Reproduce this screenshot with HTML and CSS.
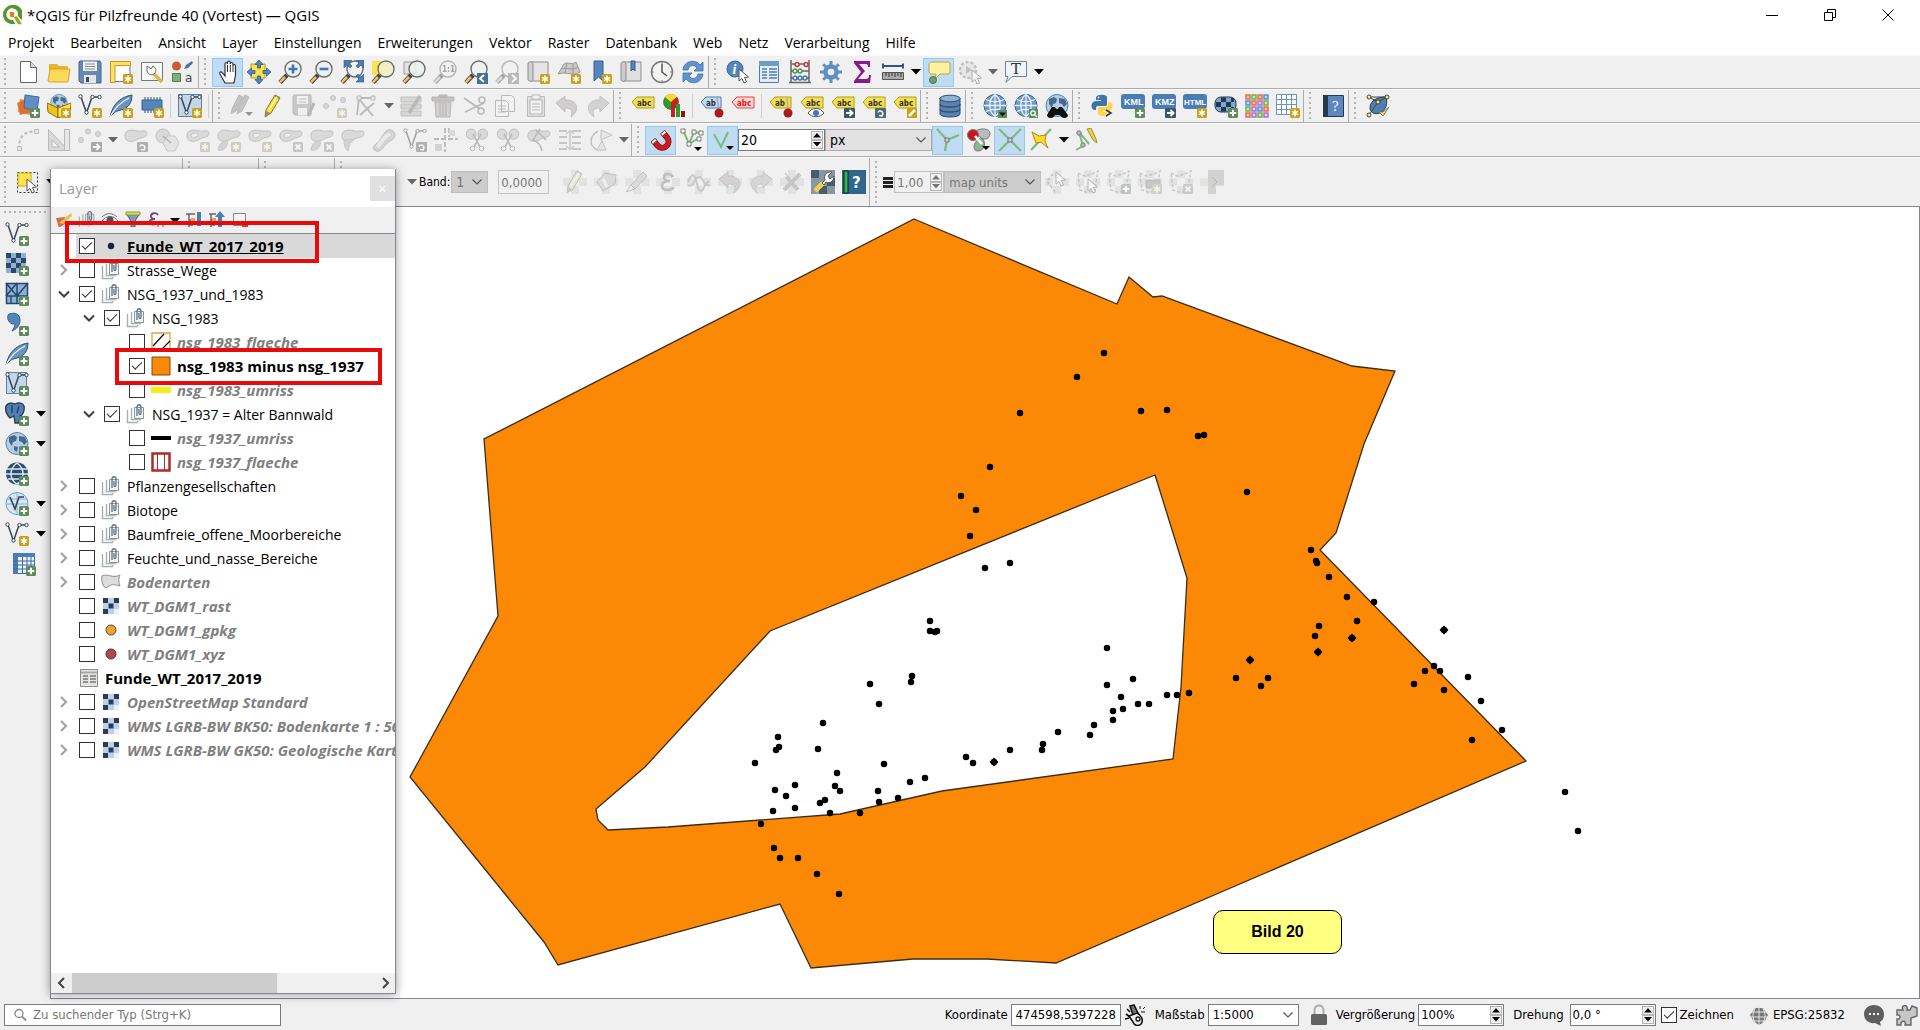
FILE: index.html
```html
<!DOCTYPE html>
<html lang="de">
<head>
    <meta charset="UTF-8">
    <meta name="viewport" content="width=device-width, initial-scale=1.0">
    <title>*QGIS für Pilzfreunde 40 (Vortest) — QGIS</title>
    <link rel="stylesheet" href="styles.css">
</head>
<body>

    <!-- icon sprite -->
    <svg class="sprite" aria-hidden="true">
        <defs>
            <!-- shared parts -->
            <g id="b-new"><rect x="14" y="14" width="10" height="10" rx="1.5" fill="#c9a21c"/><path d="M19 15.500v7M16 17.300l6 3.400M16 20.700l6-3.400" stroke="#fff" stroke-width="1.500"/></g>
            <g id="b-add"><rect x="14" y="14" width="10" height="10" rx="1.500" fill="#5b8c5a"/><path d="M19 15.700v6.600M15.700 19h6.600" stroke="#fff" stroke-width="2"/></g>
            <g id="b-del"><rect x="14" y="14" width="10" height="10" rx="1.500" fill="#b88"/><path d="M16.500 16.500l5 5M21.500 16.500l-5 5" stroke="#fff" stroke-width="1.800"/></g>
            <g id="b-go"><rect x="13" y="14" width="11" height="10" rx="1" fill="#3d5568"/><path d="M15 19h6M18.500 16l3 3-3 3" stroke="#fff" stroke-width="2" fill="none"/></g>
            <g id="b-rot"><rect x="13" y="14" width="11" height="10" rx="1" fill="#4d687a"/><path d="M17 21.500l3 .5c3-4-3-7-4-3.500" stroke="#fff" stroke-width="1.600" fill="none"/></g>
            <g id="mag"><path d="M9 15l-7 7.500" stroke="#444" stroke-width="4.500"/><path d="M7 17l-5 5.200" stroke="#f0c060" stroke-width="2.600"/><circle cx="15" cy="9" r="8" fill="#edf2ee" fill-opacity=".85" stroke="#6b6f70" stroke-width="1.400"/></g>
            <g id="cursor"><path d="M0 0v12l3-2.500 2 4.500 2.500-1-2-4.500 4-.5z" fill="#fff" stroke="#555"/></g>
            <g id="vee"><path d="M3 3l5.500 16L14 3h7" stroke="#37474f" stroke-width="1.500" fill="none"/><g fill="#fff" stroke="#37474f"><circle cx="2.500" cy="2.500" r="1.700"/><circle cx="8.500" cy="18.500" r="1.700"/><circle cx="14.500" cy="3" r="1.700"/><circle cx="21.500" cy="3" r="1.700"/></g></g>
            <g id="quill"><path d="M1 23C4 9 12 3 23 1c0 7-3 13-11 15-3 1-6 1-8 4z" fill="#6a94c0" stroke="#31506e"/><path d="M1 23C6 13 12 8 20 4" stroke="#e9f1f8" stroke-width="1.200" fill="none"/></g>
            <g id="sphere"><circle cx="12" cy="11.500" r="11" fill="#6d9cc9" stroke="#3f5f80"/><path d="M1 11.500h22M12 .5v22M3 5.500c5 3 13 3 18 0M3 17.500c5-3 13-3 18 0M12 .5c-7 5-7 17 0 22M12 .5c7 5 7 17 0 22" stroke="#e8f1fa" stroke-width="1.300" fill="none"/></g>
            <g id="earth"><circle cx="12" cy="11.500" r="11" fill="#b3cde6" stroke="#5580a8"/><path d="M4 5l5-2 3 2-1 4-3 1-1 4-3-4zM14 4l6 1 2 5-3 3-2-3-3-1zM9 14l4 1-1 5-3-2zM16 14l3 1-2 4z" fill="#46698c"/></g>
            <g id="blob"><path d="M1 9c-1-7 6-8 12-6 4 1 9-2 10 2 0 5-6 4-9 6-4 3-12 4-13-2z" fill="#b9c2b9" stroke="#7f877f"/></g>
            <g id="tag"><path d="M1 8l5-5h17v11H6z" fill="#f5e04a" stroke="#b39a18"/><text x="6" y="12" font-size="8" font-weight="700" font-family="DejaVu Sans Condensed" fill="#333">abc</text></g>
            <g id="tile"><rect x="1" y="1" width="20" height="20" fill="#8db0d6"/><path d="M1 1h5v5H1zM11 1h5v5h-5zM6 6h5v5H6zM16 6h5v5h-5zM1 11h5v5H1zM11 11h5v5h-5zM6 16h5v5H6z" fill="#2e4668"/></g>
            <g id="snips"><path d="M6 1c-6 0-6 9-1 10 3 1 6-1 6-5 0-3-2-5-5-5zM18 1c6 0 6 9 1 10-3 1-6-1-6-5 0-3 2-5 5-5z" fill="#b9c2b9" stroke="#7f877f"/><path d="M8 6l7 13M16 6L9 19" stroke="#777" stroke-width="1.600"/><circle cx="7.500" cy="20.500" r="2.300" fill="none" stroke="#777"/><circle cx="16.500" cy="20.500" r="2.300" fill="none" stroke="#777"/></g>
            <g id="fence"><path d="M2 3l6 3 8-2 6-3-2 12-1 8-9 1-6-2z" fill="none" stroke="#888" stroke-width="1.500" stroke-dasharray="3 2"/></g>
        </defs>

        <symbol id="logo" viewBox="0 0 24 24"><path d="M12 0a11.500 11.500 0 1 0 4 22.500l-3-4.500a7 7 0 1 1 6-5l4 5A11.500 11.500 0 0 0 12 0z" fill="#589632"/><path d="M14 14l4-.5 6 9.500h-5z" fill="#93b023"/><path d="M9 8l6 1-1 6-4-1z" fill="#ee7913"/></symbol>
        <symbol id="new" viewBox="0 0 24 24"><path d="M4.500 1.500h10l6 6v15h-16z" fill="#fff" stroke="#666"/><path d="M14.500 1.500v6h6" fill="#ddd" stroke="#666"/></symbol>
        <symbol id="open" viewBox="0 0 24 24"><path d="M2 4h8l2 2h9v15H2z" fill="#e8b430"/><path d="M1 21l2-12h20l-2 13H2z" fill="#ffd95a" stroke="#d9a52a"/></symbol>
        <symbol id="save" viewBox="0 0 24 24"><path d="M2 1h20l1 2v20H3l-2-2V2z" fill="#6389b4" stroke="#44648a"/><path d="M5 1.500h14V11H5z" fill="#f2f2f2"/><path d="M7 4h10M7 6.500h10M7 9h10" stroke="#8a8a8a"/><path d="M6 15h12v8H6z" fill="#e6e6e6"/><path d="M8 17h3v5H8z" fill="#35506f"/></symbol>
        <symbol id="layout" viewBox="0 0 24 24"><path d="M5 2.500h16v19H5z" fill="#fff" stroke="#777"/><path d="M1.500 1.500h20v4H6v17H1.500z" fill="#ffe066" stroke="#c29a1e"/><use href="#b-new"/></symbol>
        <symbol id="layouts" viewBox="0 0 24 24"><path d="M1.500 2.500h21v18h-21z" fill="#f7f7f7" stroke="#777"/><path d="M14 14l8 8" stroke="#d9b84c" stroke-width="3.500"/><path d="M7 6l4 3 2-3c3 2 4 5 1 8-3 2-6 0-7-3z" fill="#fff" stroke="#666"/></symbol>
        <symbol id="style" viewBox="0 0 24 24"><circle cx="5.500" cy="6" r="4.500" fill="#cc5a32"/><path d="M13 9l2-4 6-4 1 2-5 5z" fill="#4a74a8"/><path d="M1.500 13.500h8v8h-8z" fill="#80b080" stroke="#4d7d4d"/><text x="14" y="21.500" font-size="12" font-family="DejaVu Sans" fill="#444">a</text></symbol>
        <symbol id="pan" viewBox="0 0 24 24"><path d="M7 23l-5-9c-1-2 1-3 2.500-1L7 16V4c0-2 2.500-2 2.500 0V2.500c0-2 2.800-2 2.800 0V4c0-2 2.700-2 2.700 0v2c0-2 2.500-2 2.500 0v9l-1.500 8z" transform="translate(2)" fill="#fff" stroke="#333" stroke-width="1.200"/><path d="M11.500 5v7M14.300 5v7M17 6v6" stroke="#333"/></symbol>
        <symbol id="pansel" viewBox="0 0 24 24"><path d="M4 4h14v14H4z" fill="#ffe34d" stroke="#b59b20"/><path d="M12 0l4 4.500h-2.500V8h-3V4.500H8zM12 24l4-4.500h-2.500V16h-3v3.500H8zM0 12l4.500-4v2.500H8v3H4.500V16zM24 12l-4.500-4v2.500H16v3h3.500V16z" fill="#5486bd" stroke="#2f5a88" stroke-width=".8"/></symbol>
        <symbol id="zin" viewBox="0 0 24 24"><use href="#mag"/><path d="M15 4.500v9M10.500 9h9" stroke="#3f74b5" stroke-width="2.600"/></symbol>
        <symbol id="zout" viewBox="0 0 24 24"><use href="#mag"/><path d="M10.500 9h9" stroke="#3f74b5" stroke-width="2.600"/></symbol>
        <symbol id="zfull" viewBox="0 0 24 24"><use href="#mag"/><path d="M4 0h8l-3 3 3 3-2 2-3-3-3 3zM24 0v8l-3-3-3 3-2-2 3-3-3-3zM24 22h-8l3-3-3-3 2-2 3 3 3-3z" fill="#4a7db5" stroke="#2f5a88" stroke-width=".6"/></symbol>
        <symbol id="zsel" viewBox="0 0 24 24"><path d="M1 1h12v14H1z" fill="#ffe34d"/><use href="#mag"/><circle cx="15" cy="9" r="7" fill="#f5eeb0" opacity=".7"/></symbol>
        <symbol id="zlay" viewBox="0 0 24 24"><path d="M2 2h12v12H2z" fill="#e4e4e4" stroke="#999"/><use href="#mag"/></symbol>
        <symbol id="zone" viewBox="0 0 24 24"><use href="#mag"/><text x="9" y="12" font-size="8" font-weight="700" font-family="DejaVu Sans Condensed" fill="#444">1:1</text></symbol>
        <symbol id="zlast" viewBox="0 0 24 24"><use href="#mag"/><path d="M13 13h11v11H13z" fill="#4a7090"/><path d="M20 15l-4 3.500 4 3.500" stroke="#fff" stroke-width="2" fill="none"/></symbol>
        <symbol id="znext" viewBox="0 0 24 24"><use href="#mag"/><path d="M13 13h11v11H13z" fill="#777"/><path d="M17 15l4 3.500-4 3.500" stroke="#fff" stroke-width="2" fill="none"/></symbol>
        <symbol id="mapnew" viewBox="0 0 24 24"><path d="M5 2h17v19H5z" fill="#e5e5e5" stroke="#8c8c8c"/><path d="M2 4c0-3 5-3 5 0v15c0 3-5 3-5 0z" fill="#d0d0d0" stroke="#8c8c8c"/><use href="#b-new"/></symbol>
        <symbol id="map3d" viewBox="0 0 24 24"><path d="M1 14L7 4c4-3 7 2 12-2l4 10c-6 5-13-1-22 2z" fill="#c9c9c9" stroke="#999"/><path d="M4 9c6-2 12 2 17-2M10 3L8 13M16 4v10" stroke="#999" fill="none"/><use href="#b-new"/></symbol>
        <symbol id="bmnew" viewBox="0 0 24 24"><path d="M6 1h9v20l-4.500-4L6 21z" fill="#5486bd" stroke="#35608f"/><use href="#b-new"/></symbol>
        <symbol id="bm" viewBox="0 0 24 24"><path d="M4 2h18v19H4z" fill="#e0e0e0" stroke="#8c8c8c"/><path d="M2 4c0-3 5-3 5 0v15c0 3-5 3-5 0z" fill="#ccc" stroke="#8c8c8c"/><path d="M12 1h4v10l-2-2-2 2z" fill="#5486bd" stroke="#35608f"/></symbol>
        <symbol id="clock" viewBox="0 0 24 24"><circle cx="12" cy="12" r="10.500" fill="#f3f3f0" stroke="#777" stroke-width="1.500"/><path d="M12 4v8l5 4" stroke="#555" stroke-width="1.500" fill="none"/><path d="M12 2v2M12 20v2M2 12h2M20 12h2" stroke="#777"/></symbol>
        <symbol id="refresh" viewBox="0 0 24 24"><path d="M2 10C3 0 15-1 19 5l3-3v9h-9l3-3c-3-4-8-3-9 2zM22 14c-1 10-13 11-17 5l-3 3v-9h9l-3 3c3 4 8 3 9-2z" fill="#5f94cc" stroke="#3e6fa3" stroke-width=".8"/></symbol>
        <symbol id="ident" viewBox="0 0 24 24"><circle cx="9" cy="9" r="8" fill="#5486bd" stroke="#3c6a9d"/><text x="6.500" y="14" font-size="14" font-weight="700" font-style="italic" font-family="Liberation Serif" fill="#fff">i</text><use href="#cursor" x="13" y="9"/></symbol>
        <symbol id="table" viewBox="0 0 24 24"><path d="M2.500 1.500h19v21h-19z" fill="#e4eef8" stroke="#4a7db5"/><path d="M2 1h20v5H2z" fill="#6d9cc9"/><path d="M5 9h5M5 12h5M5 15h5M5 18h5M12 9h8M12 12h8M12 15h8M12 18h8" stroke="#4a7db5" stroke-width="1.500"/></symbol>
        <symbol id="abacus" viewBox="0 0 24 24"><path d="M3 0v23M21 0v23M1 22.500h22M3 4h18M3 11h18M3 18h18" stroke="#666" stroke-width="1.500"/><g fill="#fff" stroke-width="1.600"><path d="M9 2.500a2 2 0 1 0 .1 0zM18 2.500a2 2 0 1 0 .1 0z" stroke="#c33"/><path d="M7 9a2 2 0 1 0 .1 0zM12 9a2 2 0 1 0 .1 0z" stroke="#4a9a4a"/><path d="M7 16a2 2 0 1 0 .1 0zM12 16a2 2 0 1 0 .1 0zM17 16a2 2 0 1 0 .1 0z" stroke="#3f74b5"/></g></symbol>
        <symbol id="gear" viewBox="0 0 24 24"><circle cx="12" cy="12" r="5.500" fill="none" stroke="#5f8fc4" stroke-width="4.500"/><path d="M12 1v22M1 12h22M4.200 4.200l15.600 15.600M19.800 4.200L4.200 19.800" stroke="#5f8fc4" stroke-width="3"/><circle cx="12" cy="12" r="3.300" fill="#f0f0f0"/></symbol>
        <symbol id="sigma" viewBox="0 0 24 24"><path d="M4 1h16v6h-2c0-3-1-3-3-3H9l6 7-7 8h8c2 0 3-1 3-4h2l-1 8H4v-2l7-9-7-9z" fill="#8a1a8a"/></symbol>
        <symbol id="ruler" viewBox="0 0 24 24"><path d="M2 6h20M2 3.500v5M22 3.500v5" stroke="#34557d" stroke-width="2"/><path d="M1.500 12.500h21v7h-21z" fill="#aaa" stroke="#555"/><path d="M5 13v3M8 13v4M11 13v3M14 13v4M17 13v3M20 13v4" stroke="#333"/></symbol>
        <symbol id="tip" viewBox="0 0 24 24"><path d="M5 2h16c2 0 2 1 2 3v6c0 2-1 3-3 3h-7l-5 5 1-5H5c-2 0-3-1-3-3V5c0-2 1-3 3-3z" fill="#fff1a0" stroke="#b7a24e"/><circle cx="6" cy="20" r="3.500" fill="#6fa06f" stroke="#477047"/></symbol>
        <symbol id="action" viewBox="0 0 24 24"><circle cx="10" cy="10" r="8" fill="#ddd" stroke="#888" stroke-width="2.500" stroke-dasharray="3 2"/><path d="M8 6l6 4-6 4z" fill="#888"/><use href="#cursor" x="14" y="10"/></symbol>
        <symbol id="note" viewBox="0 0 24 24"><path d="M1.500 1.500h21v15H8l-6 6 2-6H1.500z" fill="#eef4fa" stroke="#77838c"/><text x="7" y="14" font-size="15" font-family="DejaVu Serif" fill="#333">T</text></symbol>
        <symbol id="source" viewBox="0 0 24 24"><path d="M1 9l10-4 4 13-11 3z" fill="#c8842b"/><path d="M4 5l12 2-2 14-12-3z" fill="#e9682c" opacity=".8"/><path d="M9 1l14 2-2 14-13-3z" fill="#5f8fc4" stroke="#3c6a9d"/><use href="#b-add"/></symbol>
        <symbol id="gpkg" viewBox="0 0 24 24"><use href="#earth" transform="translate(3) scale(.75)"/><path d="M0 9l11 5v10L1 18z" fill="#f0c419" stroke="#8a6d0c"/><path d="M24 9l-13 5v10l12-5z" fill="#ffe34d" stroke="#8a6d0c"/><use href="#b-new"/></symbol>
        <symbol id="vnew" viewBox="0 0 24 24"><use href="#vee"/><use href="#b-new"/></symbol>
        <symbol id="vadd" viewBox="0 0 24 24"><use href="#vee"/><use href="#b-add"/></symbol>
        <symbol id="qnew" viewBox="0 0 24 24"><use href="#quill"/><use href="#b-new"/></symbol>
        <symbol id="qadd" viewBox="0 0 24 24"><use href="#quill"/><use href="#b-add"/></symbol>
        <symbol id="chip" viewBox="0 0 24 24"><path d="M5 3v16M8 3v16M11 3v16M14 3v16M17 3v16M20 3v12" stroke="#35506f"/><path d="M2 6h20v10H2z" fill="#5486bd" stroke="#35608f"/><use href="#b-new"/></symbol>
        <symbol id="virt" viewBox="0 0 24 24"><path d="M.5.5h23v22H.5z" fill="#c3d6ea" stroke="#5f7f9f"/><use href="#vee"/><use href="#b-new"/></symbol>
        <symbol id="virtadd" viewBox="0 0 24 24"><path d="M1.500.5h20v21h-20z" fill="#c3d6ea" stroke="#5f7f9f"/><use href="#vee"/><use href="#b-add"/></symbol>
        <symbol id="edits" viewBox="0 0 24 24"><path d="M1 20l1-5L9 1l4 2-7 14zM7 20l1-5 7-14 4 2-7 14z" fill="#998a8a" stroke="#777"/><path d="M15 18h8l-4 4z" fill="#222"/></symbol>
        <symbol id="pencil" viewBox="0 0 24 24"><path d="M4 23l1-7L14 1l5 3-9 15z" fill="#f7dd3a" stroke="#8a7414"/><path d="M4 23l1-6 4 2zM15 1l4 2-1 2-4-2z" fill="#8b8d84"/><path d="M8 16l8-13" stroke="#fff6b0" stroke-width="1.500"/></symbol>
        <symbol id="savee" viewBox="0 0 24 24"><path d="M2 1h17v20H3l-2-2V2z" fill="#999" stroke="#777"/><path d="M5 2h11v8H5zM6 14h9v7H6z" fill="#eee"/><path d="M7 5h7M7 8h7" stroke="#888"/><path d="M16 22l6-13" stroke="#776c6c" stroke-width="3"/></symbol>
        <symbol id="addpt" viewBox="0 0 24 24"><g fill="#bbb" stroke="#888"><circle cx="3" cy="12" r="2.500"/><circle cx="10" cy="4" r="2.500"/><circle cx="20" cy="6" r="2.500"/></g><use href="#b-new"/></symbol>
        <symbol id="vertex" viewBox="0 0 24 24"><path d="M3 21L5 4h15M5 5l14 17M20 9L6 21" stroke="#777" stroke-width="1.800" fill="none"/><path d="M3 2h4v4H3zM17 2h4v4h-4z" fill="#ddd" stroke="#777"/></symbol>
        <symbol id="attr" viewBox="0 0 24 24"><path d="M1 3h20v5H1zM1 10h20v5H1zM1 17h20v5H1z" fill="#bbb8a0" stroke="#888"/><path d="M9 19L20 2" stroke="#777" stroke-width="3.500"/></symbol>
        <symbol id="trash" viewBox="0 0 24 24"><path d="M1 3h22v4H1zM8 1h8v2H8z" fill="#a88" stroke="#866"/><path d="M4 8h16l-1 15H5z" fill="#c0a5a5" stroke="#866"/><path d="M9 9v13M12 9v13M15 9v13" stroke="#866"/></symbol>
        <symbol id="cut" viewBox="0 0 24 24"><path d="M2 4l16 11M3 18L22 9" stroke="#777" stroke-width="1.800"/><circle cx="19" cy="17" r="3" fill="none" stroke="#777" stroke-width="1.500"/><circle cx="20" cy="6" r="3" fill="none" stroke="#777" stroke-width="1.500"/></symbol>
        <symbol id="copy" viewBox="0 0 24 24"><path d="M8.500 1.500h10l3 3v13h-13zM2.500 6.500h10l3 3v13h-13z" fill="#f5f5f5" stroke="#777"/><path d="M5 12h8M5 15h8M5 18h8" stroke="#777"/></symbol>
        <symbol id="paste" viewBox="0 0 24 24"><path d="M3.500 2.500h17v20h-17z" fill="#ccc" stroke="#777"/><path d="M6 6h12v14H6zM8 1h8v4H8z" fill="#f5f5f5" stroke="#777"/><path d="M8 10h8M8 13h8M8 16h8" stroke="#777"/></symbol>
        <symbol id="undo" viewBox="0 0 24 24"><path d="M1 9l9-7v4c13-1 15 11 6 17 2-6 1-9-6-9v4z" fill="#b5a09c" stroke="#8d8480"/></symbol>
        <symbol id="redo" viewBox="0 0 24 24"><path d="M23 9l-9-7v4C1 5-1 17 8 23c-2-6-1-9 6-9v4z" fill="#aab2aa" stroke="#848d84"/></symbol>
        <symbol id="lab" viewBox="0 0 24 24"><use href="#tag"/></symbol>
        <symbol id="diag" viewBox="0 0 24 24"><circle cx="9" cy="8" r="7.500" fill="#2c9c2c" stroke="#444" stroke-width=".6"/><path d="M9 8L3 3a7.500 7.500 0 0 1 12 0z" fill="#ffd92e"/><path d="M9 8l6-5c3 5 1 10-6 12.500z" fill="#c8201c"/><path d="M9 12h4v11H9z" fill="#c8201c"/><path d="M14 10h4v13h-4z" fill="#2c9c2c"/><path d="M19 17h4v6h-4z" fill="#8a1515"/></symbol>
        <symbol id="labblue" viewBox="0 0 24 24"><path d="M1 8l5-5h15v11H6z" fill="#bcdcf8" stroke="#4a7db5"/><text x="6" y="12" font-size="8" font-weight="700" font-family="DejaVu Sans Condensed" fill="#333">ab</text><path d="M17 4l2 12" stroke="#aaa" stroke-width="1.500"/><circle cx="19" cy="19" r="4.500" fill="#a81c1c"/></symbol>
        <symbol id="labred" viewBox="0 0 24 24"><path d="M1 8l5-5h17v11H6z" fill="#ffd6d6" stroke="#e04040"/><text x="6" y="12" font-size="8" font-weight="700" font-family="DejaVu Sans Condensed" fill="#e01818">abc</text></symbol>
        <symbol id="labpin" viewBox="0 0 24 24"><path d="M1 8l5-5h16v11H6z" fill="#f5e04a" stroke="#b39a18"/><text x="6" y="12" font-size="8" font-weight="700" font-family="DejaVu Sans Condensed" fill="#333">ab</text><path d="M18 4l1 12" stroke="#aaa" stroke-width="1.500"/><circle cx="19" cy="19" r="4.500" fill="#a81c1c"/></symbol>
        <symbol id="labeye" viewBox="0 0 24 24"><use href="#tag"/><path d="M8 19c4-6 12-6 16 0-4 5-12 5-16 0z" fill="#fff" stroke="#555"/><circle cx="16" cy="19" r="3" fill="#3f74b5"/></symbol>
        <symbol id="labgo" viewBox="0 0 24 24"><use href="#tag"/><use href="#b-go"/></symbol>
        <symbol id="labrot" viewBox="0 0 24 24"><use href="#tag"/><use href="#b-rot"/></symbol>
        <symbol id="labedit" viewBox="0 0 24 24"><use href="#tag"/><path d="M14 14h10v10H14z" fill="#c9a21c"/><path d="M16 22l6-6" stroke="#fff" stroke-width="2.500"/></symbol>
        <symbol id="db" viewBox="0 0 24 24"><path d="M2 4v16c0 4 20 4 20 0V4z" fill="#5c83b0" stroke="#2e4d70"/><ellipse cx="12" cy="4.500" rx="10" ry="3.300" fill="#8fb2d8" stroke="#2e4d70"/><path d="M2 10c0 4 20 4 20 0M2 15c0 4 20 4 20 0" fill="none" stroke="#2e4d70" stroke-width="1.300"/></symbol>
        <symbol id="web1" viewBox="0 0 24 24"><use href="#sphere"/><path d="M15 16h9v8h-9z" fill="#5b8c5a"/><path d="M16 18.500h7l-3.500 4z" fill="#111"/></symbol>
        <symbol id="web2" viewBox="0 0 24 24"><use href="#sphere"/><path d="M15 15h9v9h-9z" fill="#5b8c5a"/><circle cx="19" cy="19" r="2.200" fill="none" stroke="#fff" stroke-width="1.300"/><path d="M21 21l2 2" stroke="#fff" stroke-width="1.300"/></symbol>
        <symbol id="web3" viewBox="0 0 24 24"><use href="#earth"/><path d="M7 13h3l1 2h2l1-2h3l6 8c0 4-7 4-8 0h-5c-1 4-8 4-8 0z" fill="#111"/></symbol>
        <symbol id="python" viewBox="0 0 24 24"><path d="M6 3c2-3 10-3 11 0v7c0 2-1 2-2 2H8c-2 0-2 1-2 4-6 1-6-9 0-9h5V6H6z" fill="#3a74a8"/><path d="M8 20v-5c0-2 1-2 2-2h6c2 0 2-2 2-5 6-1 6 9 0 9h-5v1h4c0 5-8 5-9 2z" fill="#ffd445"/><path d="M16 16l5 3-5 3" stroke="#333" stroke-width="1.500" fill="none"/><circle cx="8.500" cy="3.500" r="1" fill="#fff"/></symbol>
        <symbol id="kml" viewBox="0 0 24 24"><rect y="0" width="24" height="15" rx="3" fill="#4a7db5"/><text x="3" y="11" font-size="9" font-weight="700" font-family="Liberation Sans" fill="#fff">KML</text><use href="#b-add"/></symbol>
        <symbol id="kmz" viewBox="0 0 24 24"><rect y="0" width="24" height="15" rx="3" fill="#4a7db5"/><text x="3" y="11" font-size="9" font-weight="700" font-family="Liberation Sans" fill="#fff">KMZ</text><use href="#b-go"/></symbol>
        <symbol id="html" viewBox="0 0 24 24"><rect y="0" width="24" height="15" rx="3" fill="#4a7db5"/><text x="1" y="11" font-size="8" font-weight="700" font-family="Liberation Sans" fill="#fff">HTML</text><use href="#b-new"/></symbol>
        <symbol id="rglobe" viewBox="0 0 24 24"><rect x="1" y="3" width="21" height="15" rx="6" fill="#7fa6d0" stroke="#26394f"/><path d="M2 8h5v5H2zM7 3.500h5V8H7zM12 8h5v5h-5zM7 13h5v4.500H7zM17 4h3v4h-3zM17 13h3v4h-3z" fill="#26394f"/><use href="#b-add"/></symbol>
        <symbol id="cgrid" viewBox="0 0 24 24"><g stroke-width="1.500" fill="none"><path d="M1 1h4v4H1zM13 1h4v4h-4zM7 7h4v4H7zM19 13h4v4h-4zM1 19h4v4H1z" stroke="#e0704a" fill="#f5c0a8"/><path d="M7 1h4v4H7zM19 7h4v4h-4zM1 13h4v4H1zM13 19h4v4h-4z" stroke="#70b050" fill="#cbe6b8"/><path d="M19 1h4v4h-4zM1 7h4v4H1zM13 13h4v4h-4z" stroke="#5a8fd0" fill="#bcd6f5"/><path d="M13 7h4v4h-4zM7 13h4v4H7zM7 19h4v4H7zM19 19h4v4h-4z" stroke="#b070d0" fill="#e5c8f2"/></g></symbol>
        <symbol id="gridnew" viewBox="0 0 24 24"><path d="M.5.500h20v20H.5zM.5 5.500h20M.5 10.500h20M.5 15.500h20M5.500.5v20M10.500.5v20M15.500.5v20" fill="#fff" stroke="#6a94c0"/><use href="#b-new"/></symbol>
        <symbol id="help" viewBox="0 0 24 24"><path d="M2.500 1.500h20v21h-20z" fill="#5c87bd" stroke="#26394f"/><path d="M2 1h5v22H2z" fill="#26394f"/><text x="11" y="17" font-size="15" font-family="Liberation Serif" fill="#fff">?</text></symbol>
        <symbol id="topo" viewBox="0 0 24 24"><path d="M4 14C4 6 12 3 20 3c2 6 0 13-6 16-6 2-10-1-10-5z" fill="#4f7fb3" stroke="#26394f"/><path d="M3 3h18l-9 5-9 13M3 3l9 5" stroke="#444" fill="none"/><g fill="#ffe87a" stroke="#444"><circle cx="3" cy="3" r="2"/><circle cx="21" cy="3" r="2"/><circle cx="12" cy="8" r="2"/><circle cx="3" cy="21" r="2"/></g><path d="M13 18l4 4 6-9-6 5z" fill="#ffe34d" stroke="#777"/></symbol>
        <symbol id="curve" viewBox="0 0 24 24"><path d="M3 21C3 10 6 4 20 3" stroke="#777" stroke-width="2" stroke-dasharray="3 2.500" fill="none"/><path d="M1.500 18.500h4v4h-4zM18.500 1.500h4v4h-4z" fill="#ddd" stroke="#777"/></symbol>
        <symbol id="square" viewBox="0 0 24 24"><path d="M1.500 1.500v21h20z" fill="#c9bbb6" stroke="#777"/><path d="M5 12v7h7z" fill="#f0f0f0" stroke="#777"/><path d="M17.500 1.500h5v21h-5z" fill="#ddd" stroke="#777"/></symbol>
        <symbol id="movept" viewBox="0 0 24 24"><g fill="#bbb" stroke="#888"><circle cx="3" cy="12" r="2.500"/><circle cx="10" cy="3.500" r="2.500"/><circle cx="20" cy="6" r="2.500"/></g><use href="#b-go"/></symbol>
        <symbol id="blobrot" viewBox="0 0 24 24"><use href="#blob"/><use href="#b-rot"/></symbol>
        <symbol id="simpl" viewBox="0 0 24 24"><circle cx="8" cy="8" r="7" fill="#b9c2b9" stroke="#7f877f"/><path d="M12 8h8l4 7-4 8h-8l-4-8z" fill="#d2d8d2" stroke="#8f9690"/><path d="M8 8l8 7" stroke="#666" stroke-width="1.500"/></symbol>
        <symbol id="ring" viewBox="0 0 24 24"><use href="#blob"/><path d="M5 8c0-4 7-3 7-1s-6 4-7 1z" fill="#f0f0f0" stroke="#8f9690"/><use href="#b-new"/></symbol>
        <symbol id="part" viewBox="0 0 24 24"><use href="#blob"/><path d="M1 22c0-5 5-10 9-9 2 4-3 11-9 9z" fill="#aab3aa" stroke="#8f9690"/><use href="#b-new"/></symbol>
        <symbol id="ringdel" viewBox="0 0 24 24"><use href="#blob"/><path d="M5 8c0-4 7-3 7-1s-6 4-7 1z" fill="#f0f0f0" stroke="#8f9690"/><use href="#b-del"/></symbol>
        <symbol id="partdel" viewBox="0 0 24 24"><use href="#blob"/><path d="M1 22c0-5 5-10 9-9 2 4-3 11-9 9z" fill="#aab3aa" stroke="#8f9690"/><use href="#b-del"/></symbol>
        <symbol id="reshape" viewBox="0 0 24 24"><use href="#blob"/><path d="M3 12c0 5 1 9 4 11 1-6 3-10 7-12z" fill="#aab3aa" stroke="#8f9690"/></symbol>
        <symbol id="offset" viewBox="0 0 24 24"><path d="M2 22c-3-4 3-6 6-10S13 0 19 2c7 3 4 9-1 11-6 3-9 14-16 9z" fill="#aab3aa" stroke="#7f877f"/><path d="M5 19c4-2 5-10 13-13" stroke="#dfe3df" stroke-width="4" fill="none"/></symbol>
        <symbol id="vrot" viewBox="0 0 24 24"><use href="#vee"/><use href="#b-rot"/></symbol>
        <symbol id="trim" viewBox="0 0 24 24"><path d="M0 11h24M11 0v24M15 0v9" stroke="#777" stroke-width="1.800" stroke-dasharray="5 2"/><path d="M15 2h6v6h-6z" fill="#c9bf9c"/><path d="M1 16h7v7H1z" fill="#c9a9a9"/></symbol>
        <symbol id="split" viewBox="0 0 24 24"><use href="#snips"/></symbol>
        <symbol id="merge" viewBox="0 0 24 24"><use href="#blob"/><path d="M9 2l10 10M13 1L6 12c6 2 8 6 9 11" stroke="#777" stroke-width="1.500" fill="none"/></symbol>
        <symbol id="align" viewBox="0 0 24 24"><path d="M1 3h8M14 3h9M1 9h8M14 9h9M1 15h8M14 15h9M1 21h8M14 21h9" stroke="#777" stroke-width="1.500"/><path d="M12 2v20M8 6l4-3 4 3M8 18l4 3 4-3" stroke="#999" stroke-width="1.500" fill="none"/></symbol>
        <symbol id="rotsym" viewBox="0 0 24 24"><path d="M12 2v10l11-5zM8 22l5-9 4 9z" fill="#ddd" stroke="#888"/><path d="M9 3C0 8 0 18 8 22" fill="none" stroke="#888" stroke-width="1.500"/></symbol>
        <symbol id="magnet" viewBox="0 0 24 24"><g fill="none"><path d="M4 12l4.500 5.500a6 6 0 0 0 9.500-8L13.500 4" stroke="#7c0c10" stroke-width="6"/><path d="M4 12l4.500 5.500a6 6 0 0 0 9.500-8L13.500 4" stroke="#cc1a1e" stroke-width="4.600"/><path d="M4 12l2 2.400M13.500 4l2 2.400" stroke="#a44" stroke-width="6"/><path d="M4.500 12.600l1.200 1.400M14 4.600l1.200 1.400" stroke="#fff" stroke-width="4.600"/></g></symbol>
        <symbol id="snapall" viewBox="0 0 24 24"><path d="M3 2l6 14 5-12 7 1M9 16l8-5" stroke="#7dba7d" stroke-width="2" fill="none"/><g fill="#fff" stroke="#777"><path d="M1 1h4v4H1zM12 2h4v4h-4zM19 3h4v4h-4zM7 14h4v4H7zM17 9h4v4h-4z"/></g><path d="M14 19h8l-4 4z" fill="#000"/></symbol>
        <symbol id="snapv" viewBox="0 0 24 24"><path d="M3 6l7 13 7-15" stroke="#7dba7d" stroke-width="2" fill="none"/><path d="M15 18h8l-4 4z" fill="#000"/></symbol>
        <symbol id="topoedit" viewBox="0 0 24 24"><path d="M1 1l10 11L9 23M11 12l12-5" stroke="#7dba7d" stroke-width="2.200" fill="none"/><path d="M9 10h4v4H9z" fill="#ccc" stroke="#777"/></symbol>
        <symbol id="overlap" viewBox="0 0 24 24"><path d="M8 3c6-3 14-3 15 2 0 6-5 7-9 5z" fill="#bbb" stroke="#777"/><circle cx="6" cy="7" r="5.500" fill="#c4181c" stroke="#777"/><path d="M7 18c1-5 6-9 9-7 3 5 1 12-5 12-3 0-4-2-4-5z" fill="#8cb88c" stroke="#777"/><path d="M8 8l7 8" stroke="#fff" stroke-width="2.500"/><path d="M15 18h8l-4 4z" fill="#000"/></symbol>
        <symbol id="inter" viewBox="0 0 24 24"><path d="M1 1l22 22M23 1L1 23" stroke="#7dba7d" stroke-width="2.200"/><path d="M10 10h4v4h-4z" fill="#ccc" stroke="#777"/></symbol>
        <symbol id="selfsnap" viewBox="0 0 24 24"><path d="M2 22L22 1" stroke="#7dba7d" stroke-width="2.200"/><path d="M3 4l7 4 7-1-1 6 3 7-7-6-5 1z" fill="#ffd92e" stroke="#b58c10"/></symbol>
        <symbol id="trace" viewBox="0 0 24 24"><path d="M1 22l7-4-4-14 10 12" stroke="#7dba7d" stroke-width="2" fill="none"/><circle cx="4" cy="5" r="2.200" fill="#bbb" stroke="#777"/><circle cx="8" cy="17" r="2.200" fill="#bbb" stroke="#777"/><path d="M12 1l4-1 5 11 1 4-4-3z" fill="#ecd04a" stroke="#a89030"/></symbol>
        <symbol id="select" viewBox="0 0 24 24"><path d="M1.500 2.500h20v20h-20z" fill="none" stroke="#333" stroke-dasharray="2 2"/><path d="M2 3h13v13H2z" fill="#ffe34d" stroke="#c9ac20"/><use href="#cursor" x="11" y="9"/></symbol>
        <symbol id="bucket" viewBox="0 0 24 24"><path d="M3 12l8-9 11 2-1 9-12 7z" fill="#bbb" stroke="#777"/><path d="M9 9l4 8" stroke="#eee" stroke-width="3"/></symbol>
        <symbol id="eraser" viewBox="0 0 24 24"><path d="M6 15L18 2l4 4-12 13z" fill="#bbb" stroke="#777"/><path d="M6 15l-5 7 9-3z" fill="#eee" stroke="#777"/></symbol>
        <symbol id="expr" viewBox="0 0 24 24"><path d="M17 7c-2-4-9-4-9 0 0 3 3 4 6 4-4 0-8 1-8 5 0 5 9 5 12 1" stroke="#777" stroke-width="2.500" fill="none"/></symbol>
        <symbol id="wave" viewBox="0 0 24 24"><path d="M1 12c5-12 7-6 9 2s5 10 8 1l4-4" stroke="#88a" stroke-width="2" fill="none"/><path d="M1 15c4 3 6-4 9-7s5 1 7 4 4 4 6 3" stroke="#a88" stroke-width="2" fill="none"/></symbol>
        <symbol id="tools" viewBox="0 0 24 24"><path d="M4 4l14 16M20 4L4 20" stroke="#888" stroke-width="4"/><path d="M3 4l3 3" stroke="#eee" stroke-width="3"/></symbol>
        <symbol id="wrench" viewBox="0 0 24 24"><path d="M0 0h24v24H0z" fill="#8797a3"/><path d="M0 0h8v8H0zM16 8h8v8h-8zM8 16h8v8H8z" fill="#4b5c68"/><path d="M4 21l8-8" stroke="#f0cf50" stroke-width="5"/><path d="M11 13l3-3c-2-5 2-9 7-8l-4 4 2 3 4-3c0 5-4 8-8 6l-2 3z" fill="#fff" stroke="#555"/></symbol>
        <symbol id="sbook" viewBox="0 0 24 24"><path d="M0 0h24v24H0z" fill="#36627f"/><path d="M2 1h4v22H2z" fill="#2eb84a" stroke="#123"/><path d="M8 2h14v20H8z" fill="#2d688e"/><text x="10" y="18" font-size="15" font-weight="700" font-family="DejaVu Sans" fill="#fff">?</text></symbol>
        <symbol id="fcur" viewBox="0 0 24 24"><path d="M8 4l-6 7 8 11" fill="none" stroke="#777" stroke-width="1.500" stroke-dasharray="3 2"/><use href="#cursor" x="11" y="2"/></symbol>
        <symbol id="fsel" viewBox="0 0 24 24"><use href="#fence"/><use href="#cursor" x="12" y="9"/></symbol>
        <symbol id="fadd" viewBox="0 0 24 24"><use href="#fence"/><use href="#b-add"/></symbol>
        <symbol id="fchip" viewBox="0 0 24 24"><use href="#fence"/><path d="M8 10h14v8H8z" fill="#889" stroke="#777"/><use href="#b-new"/></symbol>
        <symbol id="fdel" viewBox="0 0 24 24"><use href="#fence"/><use href="#b-del"/></symbol>
        <symbol id="block" viewBox="0 0 24 24"><path d="M8 0h8v24H8zM16 0h8v15h-8z" fill="#a9a88e"/><path d="M12 7l5 5-5 5" fill="none" stroke="#665"/></symbol>
        <symbol id="rasadd" viewBox="0 0 24 24"><use href="#tile"/><use href="#b-add"/></symbol>
        <symbol id="meshadd" viewBox="0 0 24 24"><path d="M1.500 1.500h21v20h-21z" fill="#8db0d6" stroke="#26476b" stroke-width="1.500"/><path d="M1 14h22M12 1v21M1 1l11 13M12 1L1 14M23 1L12 14M6 14v8" stroke="#26476b" stroke-width="1.500"/><use href="#b-add"/></symbol>
        <symbol id="comma" viewBox="0 0 24 24"><path d="M4 2c6-2 11 0 11 6 0 5-3 9-8 11 2-3 3-5 3-7C3 13 1 4 4 2z" fill="#5486bd" stroke="#35608f"/><use href="#b-add"/></symbol>
        <symbol id="pg" viewBox="0 0 24 24"><path d="M1 4c2-4 7-3 9-2 4-2 8-1 9 2 1 5-2 10-4 10l-1 7h-4l-1-7-4 2C2 13 0 8 1 4z" fill="#4f7fb3" stroke="#26394f" stroke-width="1.300"/><path d="M7 3v8M14 4l-2 7" stroke="#26394f" stroke-width="1.300"/><use href="#b-add"/></symbol>
        <symbol id="wms" viewBox="0 0 24 24"><use href="#earth"/><use href="#b-add"/></symbol>
        <symbol id="wcs" viewBox="0 0 24 24"><circle cx="12" cy="11.500" r="11" fill="#2f4d6e"/><path d="M2 7h20M1 12h22M3 17h18M12 1c-8 6-8 16 0 21M12 1c8 6 8 16 0 21" stroke="#dbe8f5" stroke-width="1.500" fill="none"/><use href="#b-add"/></symbol>
        <symbol id="wfs" viewBox="0 0 24 24"><circle cx="12" cy="11.500" r="11" fill="#d6e6f5" stroke="#6d9cc9"/><path d="M2 7h20M1 12h22M12 1v21" stroke="#8db0d6"/><path d="M5 5l5 12 4-12h5" stroke="#37474f" stroke-width="1.600" fill="none"/><use href="#b-add"/></symbol>
        <symbol id="tabadd" viewBox="0 0 24 24"><path d="M1.500 1.500h21v20h-21z" fill="#eaf1f8" stroke="#3c6a9d"/><path d="M1 1h22v4H1zM1 1h5v21H1z" fill="#4a7db5"/><path d="M1 9h22M1 13h22M1 17h22M10.500 5v16M15 5v16M19 5v16" stroke="#3c6a9d"/><use href="#b-add"/></symbol>
        <symbol id="group" viewBox="0 0 20 20"><path d="M1.500 6v12.500h10V17M5.500 4v11.500h9V14" fill="none" stroke="#a8b0b0" stroke-width="1.400"/><path d="M8.500 3.500h9v11h-9z" fill="#f2f4f4" stroke="#8e9696"/><path d="M11 12V3c0-3 4-3 4 0v6c0 2-2 2-2 0V5" fill="none" stroke="#5d7286" stroke-width="1.300"/></symbol>
        <symbol id="ras" viewBox="0 0 20 20"><path d="M2 2h16v16H2z" fill="#bcd0e8"/><path d="M2 2h5v5H2zM13 2h5v5h-5zM7.500 7.500h5v5h-5zM2 13h5v5H2z" fill="#2a3b57"/><path d="M13 13h5v5h-5z" fill="#e8f0f8"/></symbol>
        <symbol id="poly" viewBox="0 0 20 20"><path d="M1 4c6-3 11 3 18-1-2 4-1 8 0 11-5-1-8-3-12 1-5 3-7-6-6-11z" fill="#dcdcdc" stroke="#8f8f8f"/></symbol>
        <symbol id="sheet" viewBox="0 0 20 20"><path d="M1.500 1.500h17v17h-17z" fill="#e4e4e0" stroke="#8f8f8a"/><path d="M2 4.500h16" stroke="#aaa" stroke-width="2"/><path d="M4 8h5M4 11h5M4 14h5M11 8h6M11 11h6M11 14h6" stroke="#777" stroke-width="1.300"/></symbol>
        <symbol id="hatch" viewBox="0 0 20 20"><path d="M1 1h18v18H1z" fill="#fff" stroke="#e0a23c" stroke-width="1.300"/><path d="M2 14L13 2M10 18l9-9" stroke="#111" stroke-width="1.300"/></symbol>
        <symbol id="orange" viewBox="0 0 20 20"><path d="M1 1h18v18H1z" fill="#fc8903" stroke="#7a4a10"/></symbol>
        <symbol id="yline" viewBox="0 0 20 20"><path d="M0 10h20" stroke="#f7ee12" stroke-width="6"/></symbol>
        <symbol id="bline" viewBox="0 0 20 20"><path d="M0 10h20" stroke="#000" stroke-width="4"/></symbol>
        <symbol id="rbars" viewBox="0 0 20 20"><path d="M1.500 1.500h17v17h-17z" fill="#fff" stroke="#b02a2a" stroke-width="2.500"/><path d="M6.500 2v16M13.500 2v16" stroke="#b02a2a"/></symbol>
        <symbol id="dot" viewBox="0 0 20 20"><circle cx="10" cy="10" r="3.200" fill="#10263f"/></symbol>
        <symbol id="odot" viewBox="0 0 20 20"><circle cx="10" cy="10" r="5" fill="#f5a02a" stroke="#5b4a32"/></symbol>
        <symbol id="rdot" viewBox="0 0 20 20"><circle cx="10" cy="10" r="5" fill="#b0484e" stroke="#5b3032"/></symbol>
        <symbol id="right" viewBox="0 0 12 12"><path d="M3 1l5 5-5 5" fill="none" stroke="#a0a0a0" stroke-width="2"/></symbol>
        <symbol id="down" viewBox="0 0 12 12"><path d="M1 3.500l5 5 5-5" fill="none" stroke="#404040" stroke-width="2"/></symbol>
        <symbol id="chev" viewBox="0 0 12 12"><path d="M1.500 3.500L6 8l4.500-4.500" fill="none" stroke="#555" stroke-width="1.200"/></symbol>
        <symbol id="tri" viewBox="0 0 10 6"><path d="M0 0h10L5 5.500z" fill="currentColor"/></symbol>
        <symbol id="triup" viewBox="0 0 10 6"><path d="M0 5.500h10L5 0z" fill="currentColor"/></symbol>
        <symbol id="p-style" viewBox="0 0 18 18"><path d="M1 7l9-1 1 6-7 5z" fill="#d86a4a"/><path d="M4 12L16 2l1 3-9 8z" fill="#f0c04a"/></symbol>
        <symbol id="p-filter" viewBox="0 0 18 18"><path d="M2 2h14l-5 8v6H7v-6z" fill="#7c9cbc" stroke="#556"/><path d="M2 1h14v3H2z" fill="#cfdc6a" stroke="#8a9a3a"/></symbol>
        <symbol id="p-eye" viewBox="0 0 18 18"><path d="M1 10c4-6 12-6 16 0-4 4-12 4-16 0z" fill="#eee" stroke="#777"/><circle cx="9" cy="9" r="3.500" fill="#456"/><path d="M1 6c5-5 11-4 15 0" fill="none" stroke="#777"/></symbol>
        <symbol id="p-expr" viewBox="0 0 18 18"><path d="M11 4C9 1 4 2 4 5c0 2 2 3 4 3-3 0-6 1-5 4 1 2 5 2 7 0" fill="none" stroke="#6b4a7a" stroke-width="1.800"/><path d="M11 17v-4h5v4" fill="none" stroke="#b77" stroke-width="1.500"/></symbol>
        <symbol id="p-exp" viewBox="0 0 18 18"><path d="M1 3h9M4 3v13M4 9h4M4 14h4" stroke="#667" stroke-width="1.500"/><path d="M6 7h4v4H6z" fill="#f0a04a"/><path d="M12 1h4v14h-4z" fill="#4a7db5"/></symbol>
        <symbol id="p-col" viewBox="0 0 18 18"><path d="M1 3h7M3 3v13M3 9h4M3 14h4" stroke="#667" stroke-width="1.500"/><path d="M4 7h4v4H4z" fill="#f0a04a"/><path d="M12 0l5 6h-3v10h-4V6H7z" fill="#4a7db5"/></symbol>
        <symbol id="p-del" viewBox="0 0 18 18"><path d="M2.500 2.500h12v12h-12z" fill="#f4f4f4" stroke="#888"/><path d="M11 13h6v5h-6z" fill="#d33"/></symbol>
        <symbol id="search" viewBox="0 0 14 14"><circle cx="6" cy="5.500" r="4" fill="none" stroke="#888" stroke-width="1.300"/><path d="M9 8.500l4 4" stroke="#888" stroke-width="1.800"/></symbol>
        <symbol id="mouse" viewBox="0 0 22 22"><path d="M6 2l4-1 4 8-5 2z" fill="#777" stroke="#111" stroke-width="1.600"/><path d="M5 12l8-3c4 2 7 7 4 11-3 3-7 1-8-2z" fill="#eee" stroke="#111" stroke-width="1.600"/><circle cx="14" cy="15" r="2" fill="none" stroke="#111" stroke-width="1.300"/><path d="M2 10l4 3M1 15l4-1M3 5l3 3" stroke="#111" stroke-width="1.600"/><path d="M16 2v3M19 5l2-2M17 8h4" stroke="#111"/></symbol>
        <symbol id="lock" viewBox="0 0 18 22"><path d="M4.500 10V6c0-6 9-6 9 0v4" fill="none" stroke="#aaa" stroke-width="2"/><rect x="1" y="10" width="16" height="11" rx="1.500" fill="#636363"/></symbol>
        <symbol id="crs" viewBox="0 0 20 20"><path d="M6 3h8l5 7-4 7-5 3-5-3-4-7z" fill="#777"/><path d="M1 7h18M0 12h20M3 16h14M10 1v19M7 2c-4 5-4 12 0 17M13 2c4 5 4 12 0 17" stroke="#e6e6e6" fill="none"/></symbol>
        <symbol id="speech" viewBox="0 0 22 22"><path d="M11 1c6 0 10 4 10 9 0 4-1 6-4 8l1 4-6-3C5 20 1 15 1 10s4-9 10-9z" fill="#5e5e5e"/><path d="M6 9h2v2H6zM10 9h2v2h-2zM14 9h2v2h-2z" fill="#fff"/></symbol>
        <symbol id="plug" viewBox="0 0 22 22"><path d="M1 6h6c-3-6 6-6 4 0h3l2-4 5 2v8l-6 2v7H9c2-5-5-5-4 0H1v-6c4 1 4-5 0-4z" fill="#c6c6c6" stroke="#666" stroke-width="1.400"/></symbol>
    </svg>

    <header class="titlebar">
        <svg class="logo"><use href="#logo"/></svg>
        <h1>*QGIS für Pilzfreunde 40 (Vortest) — QGIS</h1>
        <div class="window-buttons">
            <button aria-label="Minimieren"><svg viewBox="0 0 12 12"><path d="M0 6.500h12" stroke="#000"/></svg></button>
            <button aria-label="Verkleinern"><svg viewBox="0 0 12 12"><path d="M.5 3.500h8v8h-8zM3.500 3.500v-3h8v8h-3" fill="none" stroke="#000"/></svg></button>
            <button aria-label="Schließen"><svg viewBox="0 0 12 12"><path d="M.5.5l11 11M11.500.5l-11 11" stroke="#000"/></svg></button>
        </div>
    </header>

    <nav class="menubar">
        <a href="#">Projekt</a>
        <a href="#">Bearbeiten</a>
        <a href="#">Ansicht</a>
        <a href="#">Layer</a>
        <a href="#">Einstellungen</a>
        <a href="#">Erweiterungen</a>
        <a href="#">Vektor</a>
        <a href="#">Raster</a>
        <a href="#">Datenbank</a>
        <a href="#">Web</a>
        <a href="#">Netz</a>
        <a href="#">Verarbeitung</a>
        <a href="#">Hilfe</a>
    </nav>

    <div class="toolbar-row">
        <div class="toolbar">
            <button class="tool" aria-label="Neues Projekt"><svg><use href="#new"/></svg></button>
            <button class="tool" aria-label="Öffnen"><svg><use href="#open"/></svg></button>
            <button class="tool" aria-label="Speichern"><svg><use href="#save"/></svg></button>
            <button class="tool" aria-label="Neues Drucklayout"><svg><use href="#layout"/></svg></button>
            <button class="tool" aria-label="Layoutverwaltung"><svg><use href="#layouts"/></svg></button>
            <button class="tool" aria-label="Stilverwaltung"><svg><use href="#style"/></svg></button>
        </div>
        <div class="toolbar">
            <button class="tool active" aria-label="Karte verschieben"><svg><use href="#pan"/></svg></button>
            <button class="tool" aria-label="Zur Auswahl verschieben"><svg><use href="#pansel"/></svg></button>
            <button class="tool" aria-label="Hineinzoomen"><svg><use href="#zin"/></svg></button>
            <button class="tool" aria-label="Hinauszoomen"><svg><use href="#zout"/></svg></button>
            <button class="tool" aria-label="Volle Ausdehnung"><svg><use href="#zfull"/></svg></button>
            <button class="tool" aria-label="Zur Auswahl zoomen"><svg><use href="#zsel"/></svg></button>
            <button class="tool" aria-label="Auf Layer zoomen"><svg><use href="#zlay"/></svg></button>
            <button class="tool" aria-label="Native Auflösung" disabled><svg><use href="#zone"/></svg></button>
            <button class="tool" aria-label="Zoom zurück"><svg><use href="#zlast"/></svg></button>
            <button class="tool" aria-label="Zoom vor" disabled><svg><use href="#znext"/></svg></button>
            <button class="tool" aria-label="Neue Kartenansicht"><svg><use href="#mapnew"/></svg></button>
            <button class="tool" aria-label="Neue 3D-Ansicht"><svg><use href="#map3d"/></svg></button>
            <button class="tool" aria-label="Neues Lesezeichen"><svg><use href="#bmnew"/></svg></button>
            <button class="tool" aria-label="Lesezeichen"><svg><use href="#bm"/></svg></button>
            <button class="tool" aria-label="Zeitsteuerung"><svg><use href="#clock"/></svg></button>
            <button class="tool" aria-label="Neu laden"><svg><use href="#refresh"/></svg></button>
        </div>
        <div class="toolbar last">
            <button class="tool" aria-label="Objekte abfragen"><svg><use href="#ident"/></svg></button>
            <button class="tool" aria-label="Attributtabelle"><svg><use href="#table"/></svg></button>
            <button class="tool" aria-label="Feldrechner"><svg><use href="#abacus"/></svg></button>
            <button class="tool" aria-label="Werkzeugkiste"><svg><use href="#gear"/></svg></button>
            <button class="tool" aria-label="Statistik"><svg><use href="#sigma"/></svg></button>
            <button class="tool" aria-label="Messen"><svg><use href="#ruler"/></svg></button>
            <button class="drop" aria-label="Messwerkzeuge"><svg><use href="#tri"/></svg></button>
            <button class="tool active" aria-label="Kartenhinweise"><svg><use href="#tip"/></svg></button>
            <button class="tool" aria-label="Aktion" disabled><svg><use href="#action"/></svg></button>
            <button class="drop dim" aria-label="Aktionen"><svg><use href="#tri"/></svg></button>
            <button class="tool" aria-label="Textanmerkung"><svg><use href="#note"/></svg></button>
            <button class="drop" aria-label="Anmerkungen"><svg><use href="#tri"/></svg></button>
        </div>
    </div>

    <div class="toolbar-row">
        <div class="toolbar">
            <button class="tool" aria-label="Datenquellen"><svg><use href="#source"/></svg></button>
            <button class="tool" aria-label="Neues GeoPackage"><svg><use href="#gpkg"/></svg></button>
            <button class="tool" aria-label="Neues Shapefile"><svg><use href="#vnew"/></svg></button>
            <button class="tool" aria-label="Neuer SpatiaLite-Layer"><svg><use href="#qnew"/></svg></button>
            <button class="tool" aria-label="Temporärlayer"><svg><use href="#chip"/></svg></button>
            <span class="divider"></span>
            <button class="tool" aria-label="Virtueller Layer"><svg><use href="#virt"/></svg></button>
            <span class="divider"></span>
        </div>
        <div class="toolbar">
            <button class="tool" aria-label="Aktuelle Änderungen" disabled><svg><use href="#edits"/></svg></button>
            <button class="tool" aria-label="Bearbeitungsstatus"><svg><use href="#pencil"/></svg></button>
            <button class="tool" aria-label="Änderungen speichern" disabled><svg><use href="#savee"/></svg></button>
            <button class="tool" aria-label="Punkt hinzufügen" disabled><svg><use href="#addpt"/></svg></button>
            <button class="tool" aria-label="Knotenwerkzeug" disabled><svg><use href="#vertex"/></svg></button>
            <button class="drop dim" aria-label="Knotenwerkzeuge"><svg><use href="#tri"/></svg></button>
            <button class="tool" aria-label="Attribute ändern" disabled><svg><use href="#attr"/></svg></button>
            <button class="tool" aria-label="Löschen" disabled><svg><use href="#trash"/></svg></button>
            <button class="tool" aria-label="Ausschneiden" disabled><svg><use href="#cut"/></svg></button>
            <button class="tool" aria-label="Kopieren" disabled><svg><use href="#copy"/></svg></button>
            <button class="tool" aria-label="Einfügen" disabled><svg><use href="#paste"/></svg></button>
            <button class="tool" aria-label="Rückgängig" disabled><svg><use href="#undo"/></svg></button>
            <button class="tool" aria-label="Wiederholen" disabled><svg><use href="#redo"/></svg></button>
        </div>
        <div class="toolbar">
            <button class="tool" aria-label="Beschriftung"><svg><use href="#lab"/></svg></button>
            <button class="tool" aria-label="Diagramm"><svg><use href="#diag"/></svg></button>
            <span class="divider"></span>
            <button class="tool" aria-label="Fixierte hervorheben"><svg><use href="#labblue"/></svg></button>
            <button class="tool" aria-label="Nicht platzierte zeigen"><svg><use href="#labred"/></svg></button>
            <span class="divider"></span>
            <button class="tool" aria-label="Beschriftung fixieren"><svg><use href="#labpin"/></svg></button>
            <button class="tool" aria-label="Beschriftung zeigen"><svg><use href="#labeye"/></svg></button>
            <button class="tool" aria-label="Beschriftung verschieben"><svg><use href="#labgo"/></svg></button>
            <button class="tool" aria-label="Beschriftung drehen"><svg><use href="#labrot"/></svg></button>
            <button class="tool" aria-label="Beschriftung ändern"><svg><use href="#labedit"/></svg></button>
        </div>
        <div class="toolbar">
            <button class="tool" aria-label="DB-Verwaltung"><svg><use href="#db"/></svg></button>
        </div>
        <div class="toolbar">
            <button class="tool" aria-label="Kartendienste"><svg><use href="#web1"/></svg></button>
            <button class="tool" aria-label="Kartendienste suchen"><svg><use href="#web2"/></svg></button>
            <button class="tool" aria-label="Metasuche"><svg><use href="#web3"/></svg></button>
        </div>
        <div class="toolbar">
            <button class="tool" aria-label="Python-Konsole"><svg><use href="#python"/></svg></button>
            <button class="tool" aria-label="KML laden"><svg><use href="#kml"/></svg></button>
            <button class="tool" aria-label="KMZ exportieren"><svg><use href="#kmz"/></svg></button>
            <button class="tool" aria-label="HTML erzeugen"><svg><use href="#html"/></svg></button>
            <button class="tool" aria-label="Rasterkarte laden"><svg><use href="#rglobe"/></svg></button>
            <button class="tool" aria-label="Farbraster"><svg><use href="#cgrid"/></svg></button>
            <button class="tool" aria-label="Neues Gitter"><svg><use href="#gridnew"/></svg></button>
        </div>
        <div class="toolbar">
            <button class="tool" aria-label="Hilfe"><svg><use href="#help"/></svg></button>
        </div>
        <div class="toolbar last">
            <button class="tool" aria-label="Topologieprüfung"><svg><use href="#topo"/></svg></button>
        </div>
    </div>

    <div class="toolbar-row">
        <div class="toolbar">
            <button class="tool" aria-label="Bogen" disabled><svg><use href="#curve"/></svg></button>
            <button class="tool" aria-label="Erweiterte Digitalisierung" disabled><svg><use href="#square"/></svg></button>
            <button class="tool" aria-label="Objekt verschieben" disabled><svg><use href="#movept"/></svg></button>
            <button class="drop dim" aria-label="Verschieben"><svg><use href="#tri"/></svg></button>
            <button class="tool" aria-label="Drehen" disabled><svg><use href="#blobrot"/></svg></button>
            <button class="tool" aria-label="Vereinfachen" disabled><svg><use href="#simpl"/></svg></button>
            <button class="tool" aria-label="Ring hinzufügen" disabled><svg><use href="#ring"/></svg></button>
            <button class="tool" aria-label="Teil hinzufügen" disabled><svg><use href="#part"/></svg></button>
            <button class="tool" aria-label="Ring füllen" disabled><svg><use href="#ring"/></svg></button>
            <button class="tool" aria-label="Ring löschen" disabled><svg><use href="#ringdel"/></svg></button>
            <button class="tool" aria-label="Teil löschen" disabled><svg><use href="#partdel"/></svg></button>
            <button class="tool" aria-label="Überarbeiten" disabled><svg><use href="#reshape"/></svg></button>
            <button class="tool" aria-label="Linie versetzen" disabled><svg><use href="#offset"/></svg></button>
            <button class="tool" aria-label="Linie umkehren" disabled><svg><use href="#vrot"/></svg></button>
            <button class="tool" aria-label="Verlängern" disabled><svg><use href="#trim"/></svg></button>
            <button class="tool" aria-label="Objekte trennen" disabled><svg><use href="#split"/></svg></button>
            <button class="tool" aria-label="Teile trennen" disabled><svg><use href="#split"/></svg></button>
            <button class="tool" aria-label="Verschmelzen" disabled><svg><use href="#merge"/></svg></button>
            <button class="tool" aria-label="Attribute verschmelzen" disabled><svg><use href="#align"/></svg></button>
            <button class="tool" aria-label="Symbole drehen" disabled><svg><use href="#rotsym"/></svg></button>
            <button class="drop dim" aria-label="Symbole"><svg><use href="#tri"/></svg></button>
        </div>
        <div class="toolbar last">
            <button class="tool active" aria-label="Einrasten"><svg><use href="#magnet"/></svg></button>
            <button class="tool" aria-label="Alle Layer"><svg><use href="#snapall"/></svg></button>
            <button class="tool active" aria-label="Stützpunkt"><svg><use href="#snapv"/></svg></button>
            <span class="spin tolerance">
                <input type="text" value="20" aria-label="Toleranz">
                <span class="steps"><button aria-label="Mehr"><svg><use href="#triup"/></svg></button><button aria-label="Weniger"><svg><use href="#tri"/></svg></button></span>
            </span>
            <span class="combo unit">
                <select aria-label="Einheit"><option>px</option></select>
                <svg><use href="#chev"/></svg>
            </span>
            <button class="tool active" aria-label="Topologisches Bearbeiten"><svg><use href="#topoedit"/></svg></button>
            <button class="tool" aria-label="Überlappung"><svg><use href="#overlap"/></svg></button>
            <button class="tool active" aria-label="Schnittpunkte"><svg><use href="#inter"/></svg></button>
            <button class="tool" aria-label="Selbsteinrasten"><svg><use href="#selfsnap"/></svg></button>
            <button class="drop" aria-label="Einrastoptionen"><svg><use href="#tri"/></svg></button>
            <button class="tool" aria-label="Verfolgen"><svg><use href="#trace"/></svg></button>
        </div>
    </div>

    <div class="toolbar-row tall">
        <div class="toolbar selection">
            <button class="tool" aria-label="Objekte wählen"><svg><use href="#select"/></svg></button>
            <button class="drop" aria-label="Auswahl"><svg><use href="#tri"/></svg></button>
        </div>
        <div class="toolbar short"></div>
        <div class="toolbar short"></div>
        <div class="toolbar serval">
            <button class="drop dim" aria-label="Serval"><svg><use href="#tri"/></svg></button>
            <label for="band">Band:</label>
            <span class="combo band">
                <select id="band" disabled><option>1</option></select>
                <svg><use href="#chev"/></svg>
            </span>
            <input class="cellvalue" type="text" value="0,0000" aria-label="Wert" disabled>
            <button class="tool checker" aria-label="Zellwert zeichnen" disabled><svg><use href="#pencil"/></svg></button>
            <button class="tool checker" aria-label="Füllen" disabled><svg><use href="#bucket"/></svg></button>
            <button class="tool checker" aria-label="Radieren" disabled><svg><use href="#eraser"/></svg></button>
            <button class="tool checker" aria-label="Ausdruck" disabled><svg><use href="#expr"/></svg></button>
            <button class="tool checker" aria-label="Filter" disabled><svg><use href="#wave"/></svg></button>
            <button class="tool checker" aria-label="Raster rückgängig" disabled><svg><use href="#undo"/></svg></button>
            <button class="tool checker" aria-label="Raster wiederholen" disabled><svg><use href="#redo"/></svg></button>
            <button class="tool checker" aria-label="NoData" disabled><svg><use href="#tools"/></svg></button>
            <button class="tool" aria-label="Serval-Einstellungen"><svg><use href="#wrench"/></svg></button>
            <button class="tool" aria-label="Serval-Hilfe"><svg><use href="#sbook"/></svg></button>
        </div>
        <div class="toolbar last">
            <span class="linewidth"></span>
            <span class="spin width-spin">
                <input type="text" value="1,00" aria-label="Linienbreite" disabled>
                <span class="steps"><button aria-label="Mehr" disabled><svg><use href="#triup"/></svg></button><button aria-label="Weniger" disabled><svg><use href="#tri"/></svg></button></span>
            </span>
            <span class="combo mapunit">
                <select aria-label="Karteneinheit" disabled><option>map units</option></select>
                <svg><use href="#chev"/></svg>
            </span>
            <button class="tool checker" aria-label="Linienauswahl" disabled><svg><use href="#fcur"/></svg></button>
            <button class="tool checker" aria-label="Polygonauswahl" disabled><svg><use href="#fsel"/></svg></button>
            <button class="tool checker" aria-label="Auswahl hinzufügen" disabled><svg><use href="#fadd"/></svg></button>
            <button class="tool checker" aria-label="Auswahl als Layer" disabled><svg><use href="#fchip"/></svg></button>
            <button class="tool checker" aria-label="Auswahl löschen" disabled><svg><use href="#fdel"/></svg></button>
            <button class="tool checker" aria-label="Ausführen" disabled><svg><use href="#block"/></svg></button>
        </div>
    </div>

    <main class="workspace">
        <aside class="side-tools">
            <div><button aria-label="Vektorlayer"><svg><use href="#vadd"/></svg></button></div>
            <div><button aria-label="Rasterlayer"><svg><use href="#rasadd"/></svg></button></div>
            <div><button aria-label="Netzlayer"><svg><use href="#meshadd"/></svg></button></div>
            <div><button aria-label="Textdatei"><svg><use href="#comma"/></svg></button></div>
            <div><button aria-label="SpatiaLite"><svg><use href="#qadd"/></svg></button></div>
            <div><button aria-label="Virtueller Layer"><svg><use href="#virtadd"/></svg></button></div>
            <div><button aria-label="PostGIS"><svg><use href="#pg"/></svg></button><button class="drop" aria-label="Datenbanken"><svg><use href="#tri"/></svg></button></div>
            <div><button aria-label="WMS"><svg><use href="#wms"/></svg></button><button class="drop" aria-label="Kacheldienste"><svg><use href="#tri"/></svg></button></div>
            <div><button aria-label="WCS"><svg><use href="#wcs"/></svg></button></div>
            <div><button aria-label="WFS"><svg><use href="#wfs"/></svg></button><button class="drop" aria-label="Objektdienste"><svg><use href="#tri"/></svg></button></div>
            <div><button aria-label="Neuer Vektorlayer"><svg><use href="#vnew"/></svg></button><button class="drop" aria-label="Neue Layer"><svg><use href="#tri"/></svg></button></div>
            <div class="centered"><button aria-label="Tabelle"><svg><use href="#tabadd"/></svg></button></div>
        </aside>

        <section class="canvas">
            <svg class="map" viewBox="51 207 1868 791" preserveAspectRatio="xMinYMin meet">
                <path class="area" fill-rule="evenodd" d="M914 219L1117 304L1129 277L1153 297L1162 296L1352 366L1395 371L1364 444L1336 533L1320 550L1526 761L1056 963L987 959L913 959L811 968L780 904L558 965L544 942L410 777L498 616L484 439Z
                    M1155 475L1187 578L1181 687L1173 759L942 791L840 814L668 827L608 830L598 820L596 809L645 767L770 631Z"/>
                <!-- fungus finds, one zero-length stroke per point -->
                <path class="finds" d="M1104 353h0M1077 377h0M1020 413h0M1141 411h0M1167 410h0M1198 436h0M1204 435h0M990 467h0M961 496h0M976 510h0M970 536h0M985 568h0M1010 563h0M1247 492h0M1311 550h0M1316 561h0M1317 563h0
                    M1329 577h0M1347 597h0M1374 602h0M1357 621h0M1352 638h0M1319 626h0M1315 636h0M1318 652h0M1444 630h0M1250 660h0M1236 678h0M1268 678h0M1261 686h0M1107 648h0M1107 685h0M1133 679h0M1121 697h0M1123 709h0M1113 711h0M1113 720h0M1138 704h0M1149 704h0M1167 695h0M1177 695h0M1189 693h0M1094 725h0M1090 735h0M1058 732h0
                    M1434 666h0M1440 671h0M1425 671h0M1414 684h0M1444 690h0M1468 677h0M1481 701h0M1502 730h0M1472 740h0M1565 792h0M1578 831h0
                    M930 621h0M930 631h0M935 632h0M937 631h0M912 676h0M911 682h0M870 684h0M879 704h0M823 723h0M778 737h0M779 747h0M776 750h0M818 749h0M755 763h0M837 773h0M835 786h0M840 791h0M825 800h0M820 803h0M830 813h0M860 813h0M878 791h0M879 802h0M898 798h0M910 782h0M925 778h0M884 764h0M775 790h0M795 785h0M786 796h0M795 808h0M773 811h0M761 824h0M774 848h0M780 858h0M798 858h0M817 874h0M839 894h0M966 757h0M973 763h0M994 762h0M1010 750h0M1043 744h0M1042 750h0"/>
                <path class="finds-double" d="M1444 625.500l4.500 4.500-4.500 4.500-4.500-4.500zM1250 655.500l4.500 4.500-4.500 4.500-4.500-4.500zM994 757.500l4.500 4.500-4.500 4.500-4.500-4.500zM1318 647.500l4.500 4.500-4.500 4.500-4.500-4.500zM1352 633.500l4.500 4.500-4.500 4.500-4.500-4.500z"/>
            </svg>
            <div class="annotation">Bild 20</div>
        </section>

        <section class="panel">
            <header>
                <h2>Layer</h2>
                <button aria-label="Schließen">×</button>
            </header>
            <div class="panel-tools">
                <button aria-label="Gestaltung"><svg><use href="#p-style"/></svg></button>
                <button aria-label="Gruppe hinzufügen"><svg><use href="#group"/></svg></button>
                <button aria-label="Sichtbarkeit"><svg><use href="#p-eye"/></svg></button>
                <button aria-label="Filter"><svg><use href="#p-filter"/></svg></button>
                <button aria-label="Ausdrucksfilter"><svg><use href="#p-expr"/></svg></button>
                <button class="drop" aria-label="Filteroptionen"><svg><use href="#tri"/></svg></button>
                <button aria-label="Alles ausklappen"><svg><use href="#p-exp"/></svg></button>
                <button aria-label="Alles einklappen"><svg><use href="#p-col"/></svg></button>
                <button aria-label="Entfernen"><svg><use href="#p-del"/></svg></button>
            </div>
            <ul class="tree">
                <li class="selected"><span class="toggle"></span><span class="entry"><input type="checkbox" id="l0" checked><svg><use href="#dot"/></svg><label for="l0">Funde_WT_2017_2019</label></span></li>
                <li><button class="toggle" aria-label="Ausklappen"><svg><use href="#right"/></svg></button><input type="checkbox" id="l1"><svg><use href="#group"/></svg><label for="l1">Strasse_Wege</label></li>
                <li><button class="toggle" aria-label="Einklappen"><svg><use href="#down"/></svg></button><input type="checkbox" id="l2" checked><svg><use href="#group"/></svg><label for="l2">NSG_1937_und_1983</label></li>
                <li class="level-2"><button class="toggle" aria-label="Einklappen"><svg><use href="#down"/></svg></button><input type="checkbox" id="l3" checked><svg><use href="#group"/></svg><label for="l3">NSG_1983</label></li>
                <li class="level-3 off"><span class="toggle"></span><input type="checkbox" id="l4"><svg><use href="#hatch"/></svg><label for="l4">nsg_1983_flaeche</label></li>
                <li class="level-3 bold"><span class="toggle"></span><input type="checkbox" id="l5" checked><svg><use href="#orange"/></svg><label for="l5">nsg_1983 minus nsg_1937</label></li>
                <li class="level-3 off"><span class="toggle"></span><input type="checkbox" id="l6"><svg><use href="#yline"/></svg><label for="l6">nsg_1983_umriss</label></li>
                <li class="level-2"><button class="toggle" aria-label="Einklappen"><svg><use href="#down"/></svg></button><input type="checkbox" id="l7" checked><svg><use href="#group"/></svg><label for="l7">NSG_1937 = Alter Bannwald</label></li>
                <li class="level-3 off"><span class="toggle"></span><input type="checkbox" id="l8"><svg><use href="#bline"/></svg><label for="l8">nsg_1937_umriss</label></li>
                <li class="level-3 off"><span class="toggle"></span><input type="checkbox" id="l9"><svg><use href="#rbars"/></svg><label for="l9">nsg_1937_flaeche</label></li>
                <li><button class="toggle" aria-label="Ausklappen"><svg><use href="#right"/></svg></button><input type="checkbox" id="l10"><svg><use href="#group"/></svg><label for="l10">Pflanzengesellschaften</label></li>
                <li><button class="toggle" aria-label="Ausklappen"><svg><use href="#right"/></svg></button><input type="checkbox" id="l11"><svg><use href="#group"/></svg><label for="l11">Biotope</label></li>
                <li><button class="toggle" aria-label="Ausklappen"><svg><use href="#right"/></svg></button><input type="checkbox" id="l12"><svg><use href="#group"/></svg><label for="l12">Baumfreie_offene_Moorbereiche</label></li>
                <li><button class="toggle" aria-label="Ausklappen"><svg><use href="#right"/></svg></button><input type="checkbox" id="l13"><svg><use href="#group"/></svg><label for="l13">Feuchte_und_nasse_Bereiche</label></li>
                <li class="off"><button class="toggle" aria-label="Ausklappen"><svg><use href="#right"/></svg></button><input type="checkbox" id="l14"><svg><use href="#poly"/></svg><label for="l14">Bodenarten</label></li>
                <li class="off"><span class="toggle"></span><input type="checkbox" id="l15"><svg><use href="#ras"/></svg><label for="l15">WT_DGM1_rast</label></li>
                <li class="off"><span class="toggle"></span><input type="checkbox" id="l16"><svg><use href="#odot"/></svg><label for="l16">WT_DGM1_gpkg</label></li>
                <li class="off"><span class="toggle"></span><input type="checkbox" id="l17"><svg><use href="#rdot"/></svg><label for="l17">WT_DGM1_xyz</label></li>
                <li class="bold sheet"><span class="toggle"></span><svg><use href="#sheet"/></svg><span>Funde_WT_2017_2019</span></li>
                <li class="off"><button class="toggle" aria-label="Ausklappen"><svg><use href="#right"/></svg></button><input type="checkbox" id="l19"><svg><use href="#ras"/></svg><label for="l19">OpenStreetMap Standard</label></li>
                <li class="off"><button class="toggle" aria-label="Ausklappen"><svg><use href="#right"/></svg></button><input type="checkbox" id="l20"><svg><use href="#ras"/></svg><label for="l20">WMS LGRB-BW BK50: Bodenkarte 1 : 50</label></li>
                <li class="off"><button class="toggle" aria-label="Ausklappen"><svg><use href="#right"/></svg></button><input type="checkbox" id="l21"><svg><use href="#ras"/></svg><label for="l21">WMS LGRB-BW GK50: Geologische Karte</label></li>
            </ul>
            <div class="scrollbar">
                <button aria-label="Nach links"><svg viewBox="0 0 12 12"><path d="M8 1L3 6l5 5" fill="none" stroke="#444" stroke-width="2"/></svg></button>
                <span class="thumb"></span>
                <button aria-label="Nach rechts"><svg viewBox="0 0 12 12"><path d="M4 1l5 5-5 5" fill="none" stroke="#444" stroke-width="2"/></svg></button>
            </div>
            <span class="mark mark-points"></span>
            <span class="mark mark-area"></span>
        </section>
    </main>

    <footer class="statusbar">
        <label class="locator"><svg><use href="#search"/></svg><input type="text" placeholder="Zu suchender Typ (Strg+K)" aria-label="Suche"></label>
        <div class="status-items">
            <label for="coord">Koordinate</label>
            <input class="coord" id="coord" type="text" value="474598,5397228">
            <button class="status-icon mouse" aria-label="Mausposition"><svg><use href="#mouse"/></svg></button>
            <label for="scale">Maßstab</label>
            <span class="combo scale">
                <select id="scale"><option>1:5000</option></select>
                <svg><use href="#chev"/></svg>
            </span>
            <button class="status-icon lock" aria-label="Maßstab sperren"><svg><use href="#lock"/></svg></button>
            <label for="magnify">Vergrößerung</label>
            <span class="spin status-spin">
                <input id="magnify" type="text" value="100%">
                <span class="steps"><button aria-label="Mehr"><svg><use href="#triup"/></svg></button><button aria-label="Weniger"><svg><use href="#tri"/></svg></button></span>
            </span>
            <label class="rotation" for="rotation">Drehung</label>
            <span class="spin status-spin">
                <input id="rotation" type="text" value="0,0 °">
                <span class="steps"><button aria-label="Mehr"><svg><use href="#triup"/></svg></button><button aria-label="Weniger"><svg><use href="#tri"/></svg></button></span>
            </span>
            <span class="render">
                <input type="checkbox" id="render" checked>
                <label for="render">Zeichnen</label>
            </span>
            <button class="crs"><svg><use href="#crs"/></svg>EPSG:25832</button>
            <button class="status-icon" aria-label="Meldungen"><svg><use href="#speech"/></svg></button>
            <button class="status-icon" aria-label="Erweiterung"><svg><use href="#plug"/></svg></button>
        </div>
    </footer>

</body>
</html>
```
FILE: styles.css
```css
:root {
    --bar: #f0f0f0;
    --line: #adadad;
    --edge: #828790;
    --highlight: #c0dcf3;
    --field-font: 'DejaVu Sans Condensed', 'DejaVu Sans', sans-serif;
}

* {
    box-sizing: border-box;
}

body {
    margin: 0;
    height: 100vh;
    display: flex;
    flex-direction: column;
    overflow: hidden;
    background: #fff;
    color: #000;
    font-family: 'Open Sans', sans-serif;
    font-size: 14px;
}

button, input, select {
    font: inherit;
    color: inherit;
}

button {
    display: flex;
    align-items: center;
    justify-content: center;
    flex: none;
    padding: 0;
    border: none;
    background: none;
}

.sprite {
    display: none;
}

/* title and menu */
.titlebar {
    display: flex;
    align-items: center;
    flex: none;
    height: 31px;
    padding: 0 3px 2px 2px;
}

.logo {
    width: 20px;
    height: 20px;
    margin-right: 5px;
}

.titlebar h1 {
    margin: 0;
    font-size: 15px;
    font-weight: 400;
}

.window-buttons {
    display: flex;
    margin-left: auto;
}

.window-buttons button {
    width: 58px;
    height: 28px;
}

.window-buttons svg {
    width: 12px;
    height: 12px;
}

.menubar {
    display: flex;
    flex: none;
    height: 24px;
}

.menubar a {
    padding: 0 8px;
    color: #000;
    line-height: 23px;
    text-decoration: none;
}

/* toolbars */
.toolbar-row {
    display: flex;
    flex: none;
    height: 34px;
    background: var(--bar);
    border-top: 1px solid #fafafa;
    border-bottom: 1px solid var(--line);
    font-family: var(--field-font);
}

.toolbar-row.tall {
    height: 50px;
    border-bottom-color: var(--edge);
}

.toolbar {
    display: flex;
    align-items: center;
    flex: none;
    margin-right: 1px;
    border-right: 1px solid var(--line);
}

.toolbar::before {
    content: '';
    width: 2px;
    height: 28px;
    margin: 0 6px 0 4px;
    background: repeating-linear-gradient(#b4b4b4 0 2px, transparent 2px 5px);
}

.tall .toolbar::before {
    height: 42px;
}

.toolbar.last {
    border-right: none;
}

.tool {
    width: 31px;
    height: 29px;
}

.tool svg {
    width: 24px;
    height: 24px;
}

.tool.active {
    background: var(--highlight);
    border: 1px solid #96c8ee;
}

.tool:disabled svg {
    filter: grayscale(0.8);
    opacity: 0.45;
}

.tool.checker svg {
    background: repeating-conic-gradient(#c8cfcf 0 25%, transparent 0 50%) 0 0 / 16px 16px;
    opacity: 0.4;
}

.drop {
    width: 15px;
    height: 29px;
}

.drop svg {
    width: 10px;
    height: 6px;
}

.drop.dim {
    color: #666;
}

.divider {
    width: 1px;
    height: 24px;
    margin: 0 3px;
    background: #cfcfcf;
}

.toolbar.selection {
    width: 183px;
}

.toolbar.short {
    width: 75px;
}

.serval label {
    margin-right: 1px;
    font-size: 12px;
}

.serval > .drop {
    margin-left: 56px;
}

.combo {
    display: grid;
    align-items: center;
    flex: none;
}

.combo select, .combo svg {
    grid-area: 1 / 1;
}

.combo select {
    width: 100%;
    height: 22px;
    padding: 0 4px;
    appearance: none;
    background: #e1e1e1;
    border: 1px solid #adadad;
    border-radius: 0;
    opacity: 1;
}

.combo select:disabled {
    background: #ccc;
    border-color: #bfbfbf;
    color: #777;
}

.combo svg {
    width: 12px;
    height: 12px;
    margin-right: 5px;
    justify-self: end;
    pointer-events: none;
}

.spin {
    display: flex;
    flex: none;
    height: 22px;
    background: #fff;
    border: 1px solid #7a7a7a;
}

.spin input {
    flex: 1;
    width: 0;
    padding: 0 2px;
    border: none;
    background: none;
}

.spin:has(input:disabled) {
    background: var(--bar);
    border-color: #c0c0c0;
    color: #777;
}

.steps {
    display: flex;
    flex-direction: column;
    width: 14px;
    padding: 1px;
}

.steps button {
    flex: 1;
    background: var(--bar);
    border: 1px solid #b5b5b5;
}

.steps svg {
    width: 8px;
    height: 5px;
}

.tolerance {
    width: 87px;
}

.unit {
    width: 107px;
}

.band {
    width: 37px;
}

.cellvalue {
    width: 51px;
    height: 24px;
    margin: 0 10px;
    padding: 0 2px;
    border: 1px solid #c4c4c4;
    background: var(--bar);
    color: #777;
    font-size: 13px;
}

.linewidth {
    width: 10px;
    height: 11px;
    margin-right: 1px;
    background: repeating-linear-gradient(#222 0 3px, transparent 3px 4px);
}

.width-spin {
    width: 50px;
    font-size: 13px;
}

.mapunit {
    width: 97px;
    font-size: 13px;
}

/* workspace */
.workspace {
    position: relative;
    display: flex;
    flex: 1;
    min-height: 0;
}

.side-tools {
    display: flex;
    flex-direction: column;
    flex: none;
    width: 50px;
    background: var(--bar);
}

.side-tools::before {
    content: '';
    flex: none;
    height: 2px;
    margin: 4px 4px 6px;
    background: repeating-linear-gradient(90deg, #b4b4b4 0 2px, transparent 2px 5px);
}

.side-tools div {
    display: flex;
    align-items: center;
    gap: 4px;
    height: 30px;
    padding-left: 5px;
}

.side-tools div.centered {
    padding-left: 12px;
}

.side-tools button:not(.drop) svg {
    width: 24px;
    height: 24px;
}

.canvas {
    position: relative;
    flex: 1;
    border: 1px solid var(--edge);
    border-top: none;
    overflow: hidden;
}

.map {
    display: block;
    width: 100%;
    height: 100%;
}

.area {
    fill: #fc8905;
    stroke: #3a2c1c;
    stroke-width: 1.3;
}

.finds {
    stroke: #000;
    stroke-width: 6.5;
    stroke-linecap: round;
}

.annotation {
    position: absolute;
    left: 1162px;
    top: 703px;
    width: 129px;
    border: 1px solid #000;
    border-radius: 10px;
    background: #ffff80;
    font: bold 16px/42px 'Liberation Sans', sans-serif;
    text-align: center;
}

/* floating layer panel, hangs over the toolbar above the map */
.panel {
    position: absolute;
    left: 50px;
    top: -38px;
    bottom: 5px;
    width: 346px;
    display: flex;
    flex-direction: column;
    background: #fff;
    border: 1px solid var(--edge);
    border-top: none;
    box-shadow: 0 1px 9px rgba(0, 0, 0, 0.4);
}

.panel > header {
    display: flex;
    align-items: center;
    justify-content: space-between;
    flex: none;
    height: 38px;
    padding-left: 8px;
}

.panel h2 {
    margin: 0;
    color: #999;
    font-size: 15px;
    font-weight: 400;
}

.panel > header button {
    width: 25px;
    height: 25px;
    background: #e0e0e0;
    color: #fff;
}

.panel-tools {
    display: flex;
    flex: none;
    height: 27px;
    padding: 4px 0 0 1px;
    background: var(--bar);
    border-bottom: 1px solid var(--edge);
}

.panel-tools button {
    align-items: flex-start;
    width: 23px;
    height: 16px;
    overflow: hidden;
}

.panel-tools button svg {
    width: 18px;
    height: 18px;
    flex: none;
}

.panel-tools .drop {
    width: 15px;
    padding-top: 7px;
}

.panel-tools .drop svg {
    width: 10px;
    height: 6px;
}

.tree {
    flex: 1;
    min-height: 0;
    margin: 0;
    padding: 0;
    list-style: none;
    overflow: hidden;
}

.tree li, .entry {
    display: flex;
    align-items: center;
    height: 24px;
    white-space: nowrap;
}

.tree svg {
    width: 20px;
    height: 20px;
    flex: none;
    margin: 0 6px;
}

.toggle {
    flex: none;
    width: 25px;
    margin-right: 3px;
}

.tree .toggle svg {
    width: 12px;
    height: 12px;
}

.level-2 {
    padding-left: 25px;
}

.level-3 {
    padding-left: 50px;
}

.tree .off {
    color: #808080;
    font-size: 15px;
    font-style: italic;
    font-weight: 700;
}

.tree .bold, .tree .selected {
    font-size: 15px;
    font-weight: 700;
}

.tree .selected .toggle {
    margin-right: 0;
}

.selected .entry {
    flex: 1;
    padding-left: 3px;
    background: #d9d9d9;
    text-decoration: underline;
}

.sheet svg {
    margin-left: 0;
}

input[type="checkbox"] {
    display: grid;
    place-items: center;
    flex: none;
    width: 16px;
    height: 16px;
    margin: 0;
    appearance: none;
    background: #fff;
    border: 1px solid #333;
}

input[type="checkbox"]:checked::before {
    content: '';
    width: 9px;
    height: 4px;
    margin-bottom: 3px;
    border: solid #333;
    border-width: 0 0 1px 1px;
    transform: rotate(-45deg);
}

.scrollbar {
    display: flex;
    flex: none;
    height: 20px;
    background: var(--bar);
}

.scrollbar button {
    width: 21px;
}

.scrollbar svg {
    width: 12px;
    height: 12px;
}

.scrollbar button:last-child {
    margin-left: auto;
}

.thumb {
    width: 205px;
    background: #cdcdcd;
}

.mark {
    position: absolute;
    border: 4px solid #e90b0b;
    pointer-events: none;
}

.mark-points {
    left: 14px;
    top: 52px;
    width: 254px;
    height: 42px;
}

.mark-area {
    left: 64px;
    top: 179px;
    width: 267px;
    height: 37px;
}

/* status bar */
.statusbar {
    display: flex;
    align-items: center;
    justify-content: space-between;
    flex: none;
    height: 31px;
    padding: 0 2px 0 4px;
    background: var(--bar);
    font-family: var(--field-font);
    font-size: 13px;
}

.locator {
    display: flex;
    align-items: center;
    gap: 6px;
    width: 277px;
    height: 22px;
    padding-left: 8px;
    background: #fff;
    border: 1px solid #7a7a7a;
}

.locator svg {
    width: 14px;
    height: 14px;
}

.locator input {
    flex: 1;
    border: none;
    outline: none;
    background: none;
    padding: 0;
}

.locator input::placeholder {
    color: #777;
}

.status-items, .render {
    display: flex;
    align-items: center;
    gap: 3px;
}

.coord {
    width: 110px;
    height: 22px;
    padding: 0;
    border: 1px solid #7a7a7a;
    text-align: center;
}

.scale {
    width: 91px;
}

.scale select {
    background: #fff;
    border-color: #7a7a7a;
}

.status-spin {
    width: 86px;
}

.status-icon svg {
    width: 22px;
    height: 22px;
}

.mouse {
    margin-right: 6px;
}

.lock {
    margin: 0 3px 0 6px;
}

.rotation {
    margin: 0 3px 0 6px;
}

.render {
    margin-left: 2px;
}

.crs {
    gap: 4px;
    margin: 0 15px 0 12px;
}

.crs svg {
    width: 20px;
    height: 20px;
}

.status-icon:last-child {
    margin-left: 8px;
}
```
